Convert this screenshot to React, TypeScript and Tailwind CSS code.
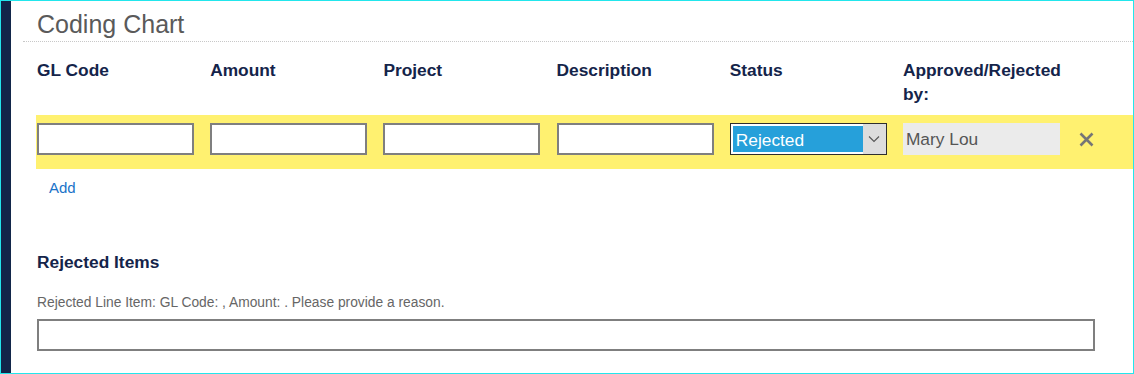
import React from "react";

const headers = ["GL Code", "Amount", "Project", "Description", "Status", "Approved/Rejected by:"];

const TextBox: React.FC = () => (
  <input type="text" className="w-[157px] h-[32px] border-2 border-[#7f7f7f] bg-white outline-none" />
);

const StatusSelect: React.FC = () => (
  <div className="w-[157px] h-[32px] flex border border-[#2e2e2e] bg-white">
    <div className="flex-1 p-[2px] pr-0">
      <div className="h-full bg-[#26a0da] text-white text-[17.33px] leading-[28px] pl-[3px]">Rejected</div>
    </div>
    <div className="w-[23px] bg-[#dddddd] flex items-center justify-center">
      <svg width="12" height="8" viewBox="0 0 12 8">
        <path d="M1 1.5 L6 6.5 L11 1.5" fill="none" stroke="#555" strokeWidth="1.1" />
      </svg>
    </div>
  </div>
);

export default function App() {
  return (
    <div className="w-[1134px] h-[374px] flex border border-[#22e6ec] bg-white font-['Liberation_Sans',Arial,sans-serif]">
      <div className="w-[10px] bg-[#12264a]" />
      <div className="flex-1 flex flex-col">
        <div className="ml-[12px] pl-[14px] pt-[9px] pb-[3px] border-b border-dotted border-[#c8c8c8]">
          <h1 className="text-[25px] leading-[28px] text-[#5a5a5a]">Coding Chart</h1>
        </div>

        <div className="pl-[26px] pt-[16px] grid grid-cols-[157px_157px_157px_157px_157px_157px] gap-x-[16.2px]">
          {headers.map((h) => (
            <div key={h} className="text-[17.33px] leading-[24px] font-bold text-[#14244a]">
              {h}
            </div>
          ))}
        </div>

        <div className="ml-[25px] mt-[9px] pl-[1px] pt-[8px] pb-[14px] bg-[#fff170] flex items-center gap-[16.2px]">
          <TextBox />
          <TextBox />
          <TextBox />
          <TextBox />
          <StatusSelect />
          <div className="w-[157px] h-[32px] bg-[#ebebeb] text-[#555] text-[17.33px] leading-[32px] pl-[3px]">Mary Lou</div>
          <button className="ml-[3px] w-[15px] h-[15px] flex items-center justify-center">
            <svg width="15" height="15" viewBox="0 0 15 15">
              <path d="M1.5 1.5 L13.5 13.5 M13.5 1.5 L1.5 13.5" stroke="#767676" strokeWidth="2.6" />
            </svg>
          </button>
        </div>

        <a href="#" className="ml-[38px] mt-[9px] text-[15px] leading-[20px] text-[#1a73c8] w-fit">
          Add
        </a>

        <h2 className="ml-[26px] mt-[52px] text-[17.33px] leading-[24px] font-bold text-[#14244a]">Rejected Items</h2>
        <p className="ml-[26px] mt-[21px] text-[13.8px] leading-[16px] text-[#666]">
          Rejected Line Item: GL Code: , Amount: . Please provide a reason.
        </p>
        <input type="text" className="ml-[26px] mt-[8px] w-[1058px] h-[32px] border-2 border-[#7f7f7f] bg-white outline-none" />
      </div>
    </div>
  );
}
